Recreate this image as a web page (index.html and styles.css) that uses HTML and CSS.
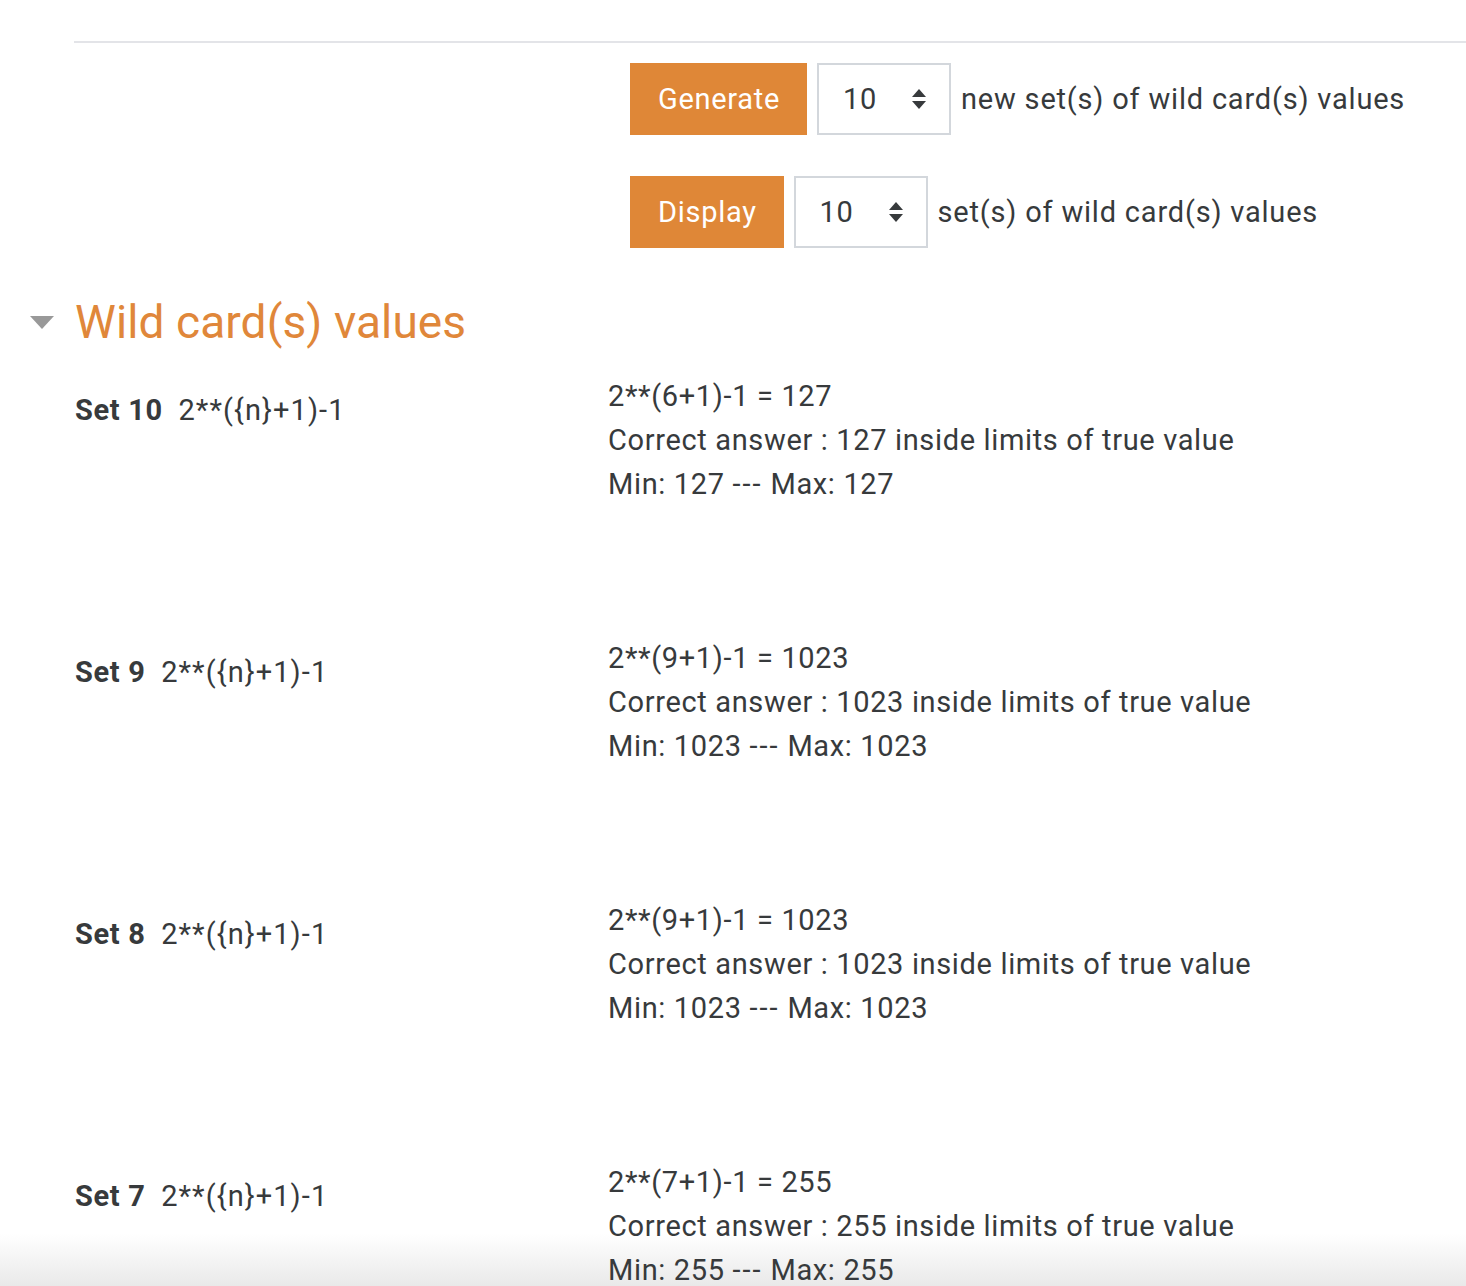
FILE: index.html
```html
<!DOCTYPE html>
<html>
<head>
<meta charset="utf-8">
<link rel="stylesheet" href="styles.css">
</head>
<body>
<div class="page">
  <hr class="rule">
  <div class="controls">
    <div class="ctrl-row">
      <button class="btn">Generate</button>
      <div class="select"><span>10</span><svg class="caret" width="16" height="22" viewBox="0 0 16 22"><path d="M8 1 L15 9 H1 Z M1 13 H15 L8 21 Z" fill="#373a3c"/></svg></div>
      <span class="ctrl-label">new set(s) of wild card(s) values</span>
    </div>
    <div class="ctrl-row">
      <button class="btn">Display</button>
      <div class="select"><span>10</span><svg class="caret" width="16" height="22" viewBox="0 0 16 22"><path d="M8 1 L15 9 H1 Z M1 13 H15 L8 21 Z" fill="#373a3c"/></svg></div>
      <span class="ctrl-label">set(s) of wild card(s) values</span>
    </div>
  </div>
  <div class="section-head">
    <svg class="toggle" width="24" height="14" viewBox="0 0 24 14"><path d="M0 0 H24 L12 13 Z" fill="#999"/></svg>
    <h2 class="section-title">Wild card(s) values</h2>
  </div>
  <div class="sets">
    <div class="set">
      <div class="set-label"><b>Set 10</b>&nbsp; <span class="formula">2**({n}+1)-1</span></div>
      <div class="set-values">
        <div>2**(6+1)-1 = 127</div>
        <div>Correct answer : 127 inside limits of true value</div>
        <div>Min: 127 <span class="dash">---</span> Max: 127</div>
      </div>
    </div>
    <div class="set">
      <div class="set-label"><b>Set 9</b>&nbsp; <span class="formula">2**({n}+1)-1</span></div>
      <div class="set-values">
        <div>2**(9+1)-1 = 1023</div>
        <div>Correct answer : 1023 inside limits of true value</div>
        <div>Min: 1023 <span class="dash">---</span> Max: 1023</div>
      </div>
    </div>
    <div class="set">
      <div class="set-label"><b>Set 8</b>&nbsp; <span class="formula">2**({n}+1)-1</span></div>
      <div class="set-values">
        <div>2**(9+1)-1 = 1023</div>
        <div>Correct answer : 1023 inside limits of true value</div>
        <div>Min: 1023 <span class="dash">---</span> Max: 1023</div>
      </div>
    </div>
    <div class="set">
      <div class="set-label"><b>Set 7</b>&nbsp; <span class="formula">2**({n}+1)-1</span></div>
      <div class="set-values">
        <div>2**(7+1)-1 = 255</div>
        <div>Correct answer : 255 inside limits of true value</div>
        <div>Min: 255 <span class="dash">---</span> Max: 255</div>
      </div>
    </div>
  </div>
</div>
</body>
</html>
```

FILE: styles.css
```css
html {
  height: 100%;
  overflow: hidden;
  background: linear-gradient(to bottom, #ffffff 0, #ffffff calc(100% - 52px), #e9e9e9 100%);
}
body {
  margin: 0;
  padding: 0;
  font-family: Roboto, "Liberation Sans", sans-serif;
  color: #373a3c;
  font-size: 29px;
  letter-spacing: 0.65px;
  font-variant-ligatures: none;
}
.page {
  padding-top: 41px;
}
.rule {
  margin: 0 0 0 74px;
  border: 0;
  height: 2px;
  background: #e3e4e8;
}
.controls {
  display: flex;
  flex-direction: column;
  gap: 41px;
  padding: 20px 0 0 630px;
}
.ctrl-row {
  display: flex;
  align-items: center;
  gap: 10px;
}
.btn {
  height: 72px;
  padding: 0 27px 0 28px;
  border: 0;
  background: #df8737;
  color: #fff;
  font-family: inherit;
  font-size: 29px;
  letter-spacing: 0.7px;
}
.select {
  box-sizing: border-box;
  height: 72px;
  width: 134px;
  border: 2px solid #d3d7dc;
  display: flex;
  align-items: center;
  justify-content: space-between;
  padding: 0 22px 0 24px;
}
.ctrl-label {
  letter-spacing: 0.8px;
}
.section-head {
  display: flex;
  align-items: center;
  margin-top: 46px;
  padding-left: 30px;
}
.toggle {
  margin-top: 2px;
}
.section-title {
  margin: 0 0 0 21px;
  font-weight: 400;
  font-size: 46px;
  letter-spacing: 0.1px;
  color: #e0873a;
  line-height: 56px;
}
.sets {
  padding-top: 24px;
}
.set {
  display: flex;
  height: 262px;
}
.set-label {
  width: 533px;
  padding-left: 75px;
  padding-top: 14px;
  line-height: 44px;
}
.set-label b {
  font-weight: 700;
}
.formula {
  letter-spacing: 1.1px;
}
.set-values {
  line-height: 44px;
}
.dash {
  letter-spacing: 2px;
}
```
